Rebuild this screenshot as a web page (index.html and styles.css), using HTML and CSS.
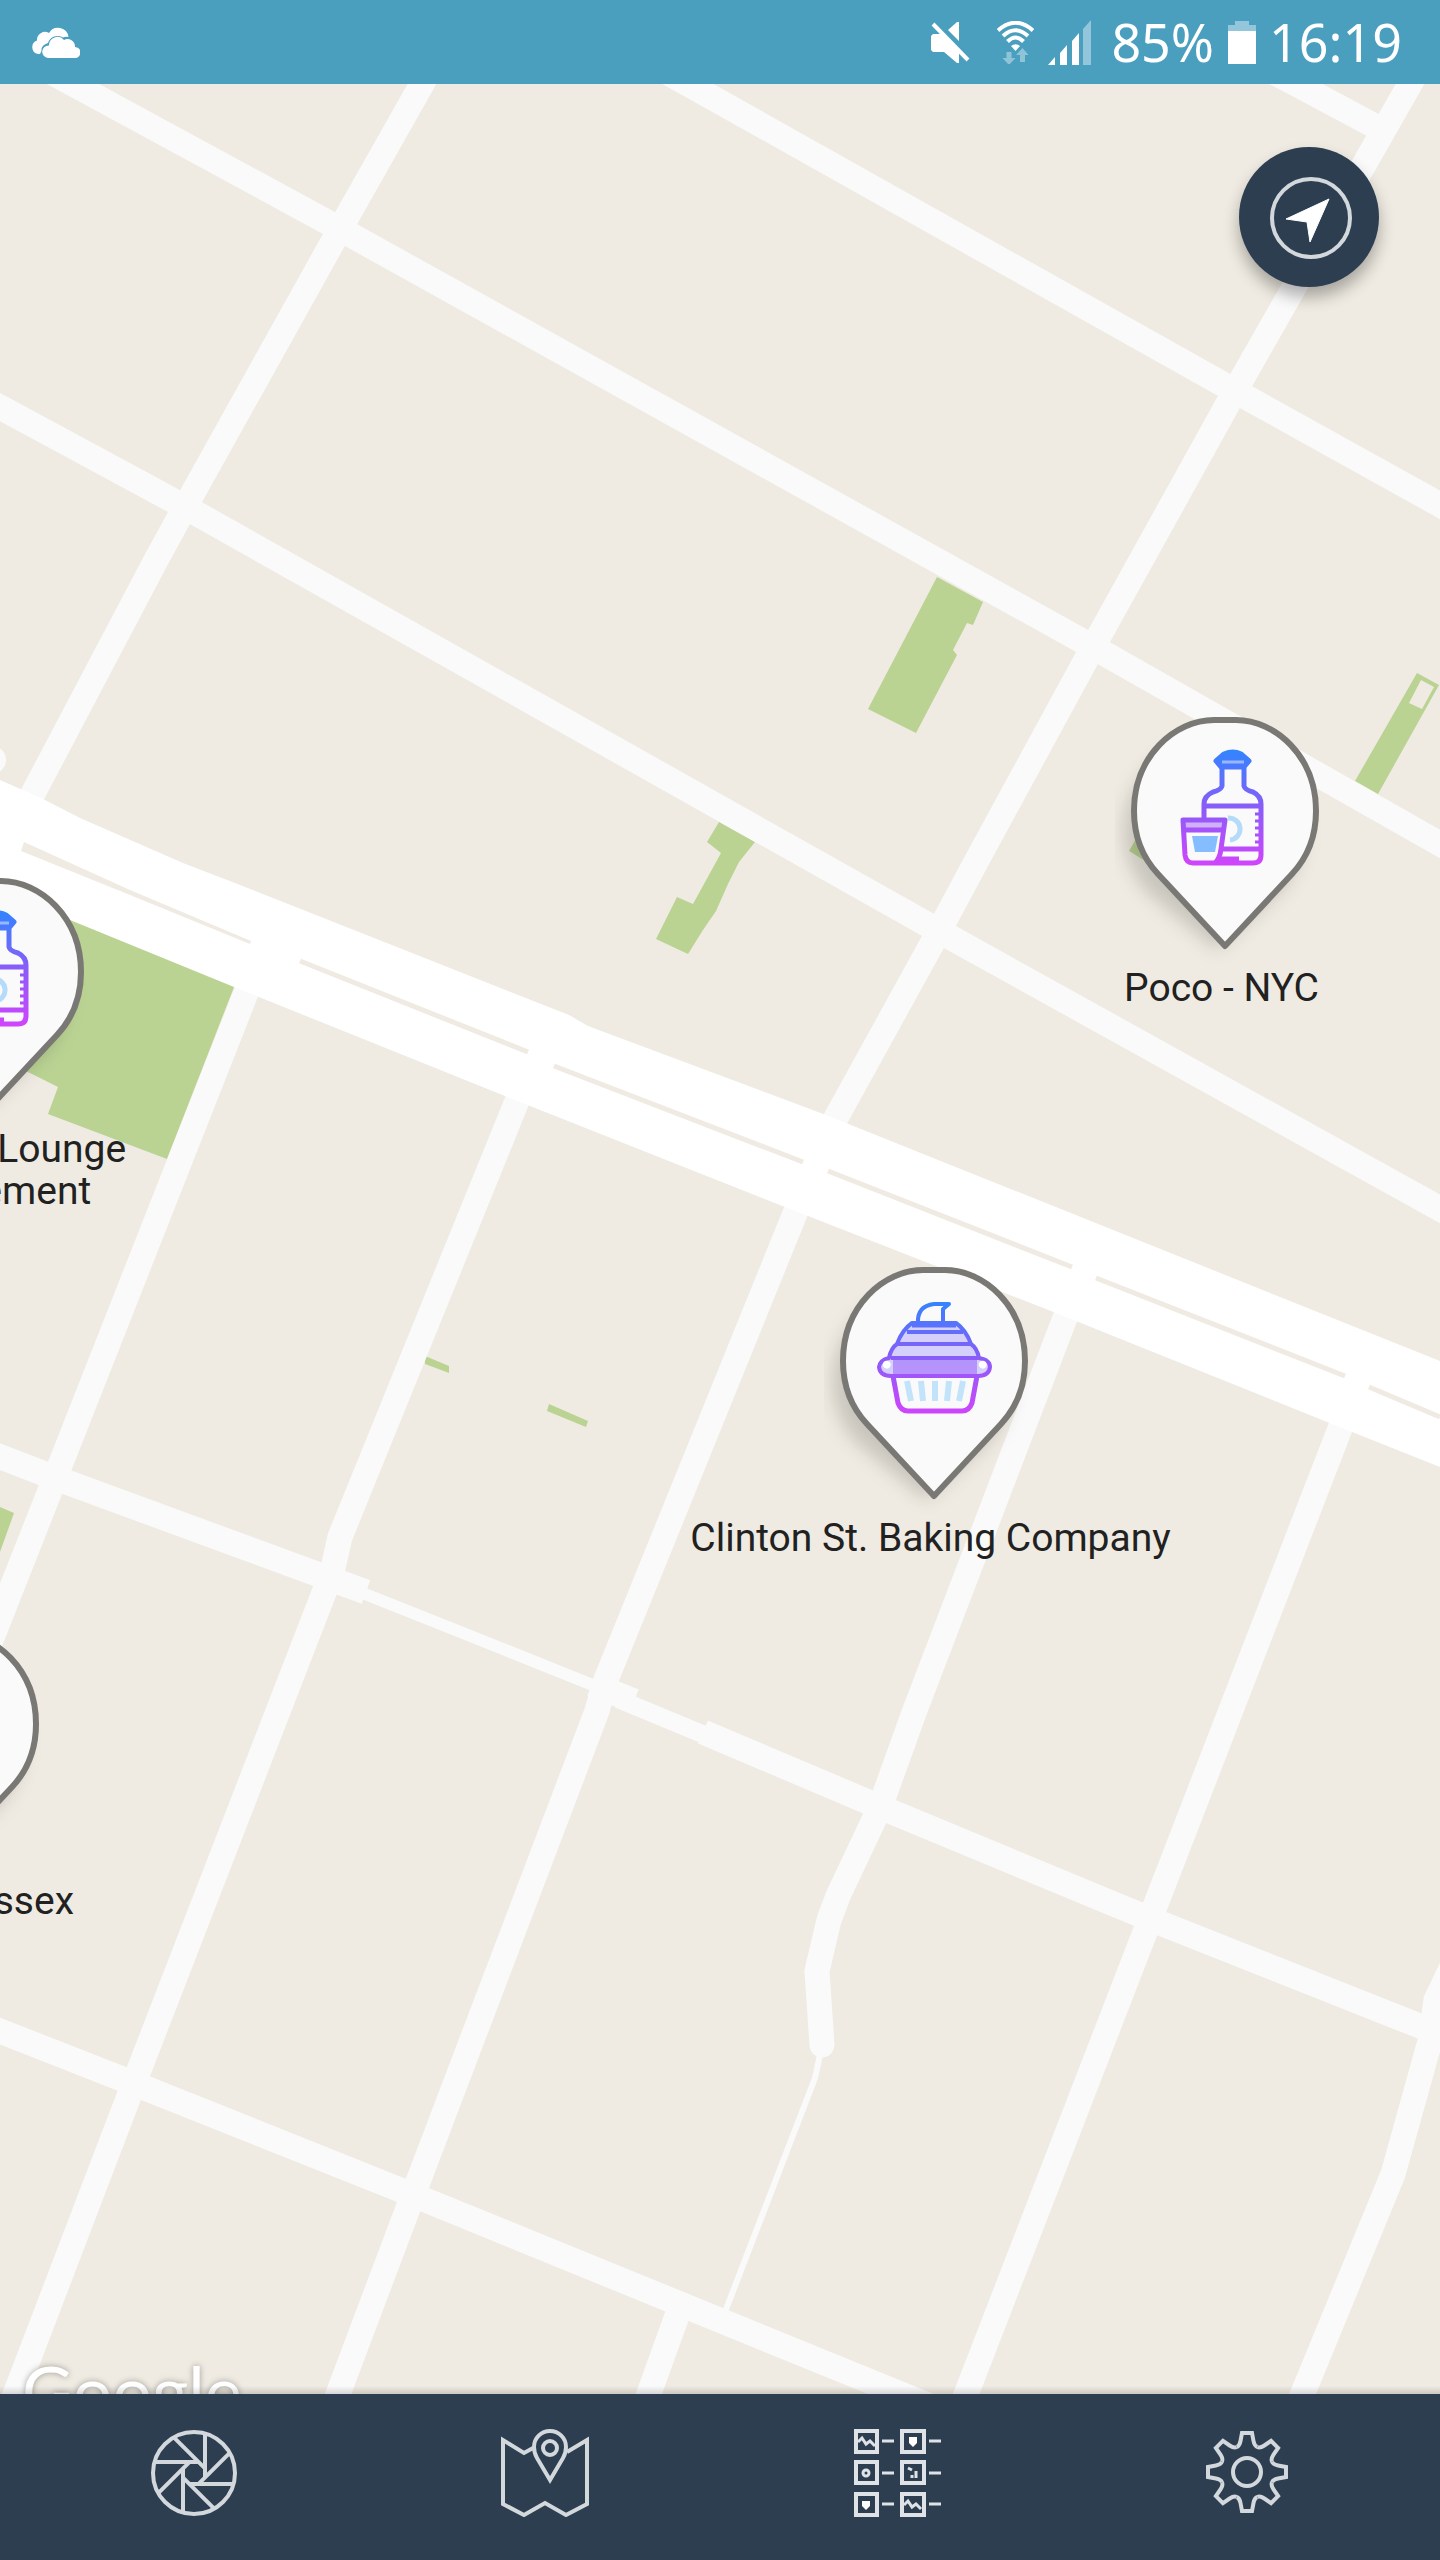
FILE: index.html
```html
<!DOCTYPE html>
<html lang="en">
<head>
<meta charset="utf-8">
<meta name="viewport" content="width=device-width, initial-scale=1">
<title>Map</title>
<link rel="stylesheet" href="styles.css">
</head>
<body>
<header class="status">
  <svg class="status-cloud" width="49" height="31" viewBox="0 0 49 31" aria-hidden="true">
    <path fill="#fff" d="M9 27H7A7 7 0 0 1 6 13.500A8 8 0 0 1 18 6A10.500 10.500 0 0 1 37.500 10Q34 9.500 32 10.500A10 10 0 0 0 17 16Q10 18 10.500 24Z"/>
    <path fill="#fff" d="M17 31A6 6 0 0 1 18 18.500A8.500 8.500 0 0 1 33 13A7.500 7.500 0 0 1 44 20A5.500 5.500 0 0 1 44 31Z"/>
  </svg>
  <svg class="status-mute" width="39" height="43" viewBox="0 0 39 43" aria-hidden="true">
    <path fill="#fff" d="M0 15L2 13H11L28 30V42H26L13 31H2L0 29ZM28 1V20L17 9L26 1Z"/>
    <path stroke="#fff" stroke-width="4" d="M2 3L37 39"/>
  </svg>
  <svg class="status-wifi" width="37" height="43" viewBox="0 0 37 43" aria-hidden="true">
    <path fill="none" stroke="#fff" stroke-width="4" d="M1 9.500Q18.500-6 36 9.500M6 15Q18.500 3.500 31 15M10.500 20.500Q18.500 12.500 26.500 20.500"/>
    <path fill="#fff" d="M14 25Q18.500 21.500 23 25L18.500 30Z"/>
    <path fill="#8fc3d8" d="M9.500 31h5v6h4l-6.500 7l-6.500-7h4ZM23 41h5v-7h3.500L25.500 27L19 34h4Z"/>
  </svg>
  <svg class="status-signal" width="43" height="46" viewBox="0 0 43 46" aria-hidden="true">
    <path fill="#fff" d="M0 46L7 38V46ZM12 46V34L19 26V46ZM24 46V22L31 14V46Z"/>
    <path fill="#93c6da" d="M35 46V10L43 1V46Z"/>
  </svg>
  <span class="status-text">85%</span>
  <svg class="status-battery" width="28" height="43" viewBox="0 0 28 43" aria-hidden="true">
    <path fill="#93c6da" d="M7 0H21V4H28V10H0V4H7Z"/>
    <path fill="#fff" d="M0 10H28V43H0Z"/>
  </svg>
  <span class="status-text">16:19</span>
</header>

<main class="map">
  <svg class="map-canvas" viewBox="0 84 1440 2310" preserveAspectRatio="xMinYMin slice" aria-hidden="true">
    <g class="park">
      <path d="M937 577L983 602L973 625L967 623L953 650L957 655L916 733L868 709Z"/>
      <path d="M719 822L755 842L739 862L728 884L716 911L703 930L688 954L656 939L677 897L693 904L721 853L707 842Z"/>
      <path fill-rule="evenodd" d="M1417 673L1439 685L1378 794L1355 781ZM1421 680L1409 703L1422 709L1434 687Z"/>
      <path d="M1129 851L1137 837L1165 850L1150 864Z"/>
      <path d="M0 880L70 905L240 975L234 987L167 1159L48 1114L58 1087L30 1073L0 1061Z"/>
      <path d="M0 1507L14 1513L0 1552Z"/>
      <path d="M425 1356L449 1366V1373L425 1364Z"/>
      <path d="M549 1404L588 1421L586 1427L547 1411Z"/>
    </g>
    <g class="road">
      <path d="M36 64L73 84L340 229L1093 647L1440 844L1460 855"/>
      <path d="M652 64L688 84L1235 391L1460 516"/>
      <path d="M-20 397L0 407L185 507L939 931L1460 1220"/>
      <path d="M1258 64L1296 84L1384 131"/>
      <path d="M433 64L422 84L340 229L185 507L155 562L18 822"/>
      <path d="M1421 64L1410 84L1235 391L1093 647L977 860L939 931L810 1165"/>
      <path d="M260 958L246 993L55 1478L-20 1668"/>
      <path d="M530 1068L517 1101L340 1537L333 1568L325 1590L134 2083L9 2410"/>
      <path d="M810 1176L796 1211L605 1682L597 1711L416 2187L332 2410"/>
      <path d="M1079 1284L1065 1318L915 1710L880 1807L838 1896L829 1920L817 1971L822 2045" stroke-linecap="round" stroke-linejoin="round"/>
      <path d="M682 2302L643 2410"/>
      <path d="M1355 1390L1341 1426L1231 1710L960 2410"/>
      <path d="M1460 1950L1436 2000L1430 2041L1393 2174L1296 2410"/>
      <path d="M-20 1449L50 1476L325 1577L366 1592"/>
      <path d="M592 1684L634 1701"/>
      <path d="M703 1732L880 1807L1150 1919L1430 2030"/>
      <path d="M-20 2023L0 2031L135 2084L413 2195L940 2410"/>
      <path class="road-mid" d="M618 1699L712 1738"/>
      <path class="road-narrow" d="M360 1592L478 1639L610 1692"/>
      <path class="road-path" d="M821 2050L815 2078L725 2312"/>
    </g>
    <circle cx="-8" cy="760" r="14" fill="#fafafa"/>
    <path class="avenue" d="M0 780L43 799L80 818L183 863L240 885L569 1015L588 1026L826 1115L1440 1361V1467L1332 1424L1056 1313L785 1207L505 1096L234 987L70 920L0 892Z"/>
    <path class="median" d="M300 961L528 1052M554 1066L803 1162M828 1171L1072 1267M1096 1278L1345 1376M1369 1387L1440 1417"/>
    <path class="median-wedge" d="M24 842L130 890L251 941L250 944L130 895L21 851Z"/>
  </svg>

  <span class="map-brand">Google</span>

  <svg class="defs" width="0" height="0" aria-hidden="true">
    <defs>
      <linearGradient id="ink" gradientUnits="userSpaceOnUse" x1="0" y1="38" x2="0" y2="150">
        <stop offset="0" stop-color="#3483ff"/>
        <stop offset=".5" stop-color="#8a5cf8"/>
        <stop offset="1" stop-color="#cf45fc"/>
      </linearGradient>
      <filter id="soft" x="-20%" y="-20%" width="140%" height="140%"><feGaussianBlur stdDeviation="9"/></filter>
      <symbol id="pin" viewBox="0 0 220 250">
        <path fill="#000" fill-opacity=".16" filter="url(#soft)" d="M102 236L32 178A90 90 0 1 1 165 178Z"/>
        <path fill="#fafafa" stroke="#797874" stroke-width="6" stroke-linejoin="round" d="M110 232L43 160C28 144 19 122 19 97C19 42 60 6 99 6H121C160 6 201 42 201 97C201 122 192 144 177 160Z"/>
      </symbol>
      <symbol id="bottle" viewBox="0 0 220 250">
        <g fill="none" stroke="url(#ink)" stroke-width="5" stroke-linejoin="round">
          <path fill="url(#ink)" d="M109 40Q118 36 126 40L134 47L129 53H106L101 47Z"/>
          <path d="M107 54V72Q106 76 98 78Q89 82 89 90V104M129 54V72Q130 76 138 78Q146 82 146 90V141Q146 149 138 149H78Q71 149 70 141L68 106H110L106 135Q105 144 100 149"/>
          <path d="M89 92H146M68 116H110M108 135H146"/>
          <path stroke-width="7" d="M102 146H124"/>
          <path stroke-width="3" d="M140 100H146M140 107H146M140 114H146M140 121H146M140 128H146"/>
          <path stroke-width="12" d="M68 111H110" opacity=".45"/>
        </g>
        <path fill="none" stroke="#b4dcfa" stroke-width="5" d="M113 104A11 11 0 1 1 115 126"/>
        <path fill="#86bdff" d="M77 122H103L100 138H80Z"/>
        <path fill="none" stroke="#fff" stroke-width="3" d="M107 48H129" opacity=".45"/>
      </symbol>
      <symbol id="cupcake" viewBox="0 0 220 250">
        <g stroke="url(#ink)" stroke-width="4" stroke-linejoin="round" fill="none">
          <path d="M94 59Q93 42 110 40H125L119 45V59"/>
          <path fill="#d5cffc" d="M88 59H132Q142 66 147 80Q153 84 155 94Q166 96 166 103Q165 112 154 112H67Q56 112 55 103Q56 96 65 94Q67 84 73 80Q78 66 88 59Z"/>
          <path d="M83 68H139M74 80H147M67 94H154"/>
          <path stroke-width="14" d="M69 103H153" opacity=".5"/>
          <path stroke-width="5" d="M88 61H132M69 112L74 139Q77 147 84 147H138Q145 147 148 139L153 112"/>
        </g>
        <path fill="#fff" d="M59 102a4 4 0 1 1 7 1a4 4 0 0 1-7-1M155 102a4 4 0 1 1 7 1a4 4 0 0 1-7-1"/>
        <path fill="none" stroke="#c3e3fb" stroke-width="6" d="M83 117L87 137M97 117L99 137M111 117V137M125 117L123 137M139 117L135 137"/>
      </symbol>
    </defs>
  </svg>

  <a class="pin pin-poco" href="#poco">
    <svg class="pin-icon" viewBox="0 0 220 250" aria-hidden="true"><use href="#pin"/><use href="#bottle"/></svg>
    <span class="pin-label">Poco - NYC</span>
  </a>
  <a class="pin pin-clinton" href="#clinton">
    <svg class="pin-icon" viewBox="0 0 220 250" aria-hidden="true"><use href="#pin"/><use href="#cupcake"/></svg>
    <span class="pin-label">Clinton St. Baking Company</span>
  </a>
  <a class="pin pin-lounge" href="#lounge">
    <svg class="pin-icon" viewBox="0 0 220 250" aria-hidden="true"><use href="#pin"/><use href="#bottle"/></svg>
    <span class="pin-label">Cocktail Lounge<br>&amp; Basement</span>
  </a>
  <a class="pin pin-essex" href="#essex">
    <svg class="pin-icon" viewBox="0 0 220 250" aria-hidden="true"><use href="#pin"/></svg>
    <span class="pin-label">Beauty &amp; Essex</span>
  </a>

  <button class="locate" type="button" aria-label="My location">
    <svg width="86" height="86" viewBox="0 0 86 86" aria-hidden="true">
      <circle cx="45" cy="44" r="39" fill="none" stroke="#d3d8dc" stroke-width="4"/>
      <path fill="#fff" stroke="#fff" stroke-width="1" stroke-linejoin="round" d="M63 25L20 45L41 48L44 68Z"/>
    </svg>
  </button>
</main>

<nav class="tabs" aria-label="Main">
  <a class="tab" href="#capture" aria-label="Capture">
    <svg width="88" height="88" viewBox="0 0 88 88" fill="none" stroke="#d3d8dd" stroke-width="4" aria-hidden="true">
      <circle cx="44" cy="44" r="41"/>
      <path id="blade" d="M55 4.500V48.500"/>
      <use href="#blade" transform="rotate(45 44 44)"/>
      <use href="#blade" transform="rotate(90 44 44)"/>
      <use href="#blade" transform="rotate(135 44 44)"/>
      <use href="#blade" transform="rotate(180 44 44)"/>
      <use href="#blade" transform="rotate(225 44 44)"/>
      <use href="#blade" transform="rotate(270 44 44)"/>
      <use href="#blade" transform="rotate(315 44 44)"/>
    </svg>
  </a>
  <a class="tab" href="#map" aria-label="Map">
    <svg width="88" height="88" viewBox="0 0 88 88" fill="none" stroke="#d3d8dd" stroke-width="4" aria-hidden="true">
      <path d="M32 19L23 24L2 11V75L23 86L44 74L65 86L86 75V11L66 23"/>
      <path d="M49 51L36 29Q33 24 33 18A16 16 0 0 1 65 18Q65 24 62 29Z"/>
      <circle cx="49" cy="19" r="7"/>
    </svg>
  </a>
  <a class="tab" href="#list" aria-label="List">
    <svg width="88" height="88" viewBox="-2 0 88 88" overflow="visible" fill="none" stroke="#dfe3e7" stroke-width="4" aria-hidden="true">
      <path d="M2 2H23V23H2ZM2 33H23V54H2ZM2 65H23V86H2ZM48 2H70V23H48ZM48 33H70V54H48ZM48 65H70V86H48Z"/>
      <path stroke-width="3" d="M28 12H40M28 44H40M28 75H40M75 12H87M75 44H87M75 75H87"/>
      <path stroke-width="3" d="M4 13L8 9L12 15L16 12L21 17M50 76L54 72L58 78L62 75L67 80M54 39L58 41M62 42V49M58 46V49"/>
      <circle cx="12" cy="44" r="3" stroke-width="3"/>
      <path fill="#fff" stroke="none" d="M55 8H63V14L59 18L55 14ZM8 72H16V77L12 81L8 77Z"/>
    </svg>
  </a>
  <a class="tab" href="#settings" aria-label="Settings">
    <svg width="88" height="88" viewBox="0 0 88 88" fill="none" stroke="#d3d8dd" stroke-width="4" aria-hidden="true">
      <circle cx="44" cy="43" r="14"/>
      <g transform="translate(0 -1)">
        <path id="tooth" d="M33.700 19Q36.500 18 37.500 13L39 5H49L50.500 13Q51.500 18 54.300 19"/>
        <use href="#tooth" transform="rotate(45 44 44)"/>
        <use href="#tooth" transform="rotate(90 44 44)"/>
        <use href="#tooth" transform="rotate(135 44 44)"/>
        <use href="#tooth" transform="rotate(180 44 44)"/>
        <use href="#tooth" transform="rotate(225 44 44)"/>
        <use href="#tooth" transform="rotate(270 44 44)"/>
        <use href="#tooth" transform="rotate(315 44 44)"/>
      </g>
    </svg>
  </a>
</nav>
</body>
</html>
```
FILE: styles.css
```css
* {
  box-sizing: border-box;
}

body {
  display: flex;
  flex-direction: column;
  min-height: 100vh;
  margin: 0;
  background: #efebe2;
  color: #212121;
  font-family: Roboto, "Liberation Sans", sans-serif;
}

svg {
  display: block;
}

/* Status bar */
.status {
  display: flex;
  align-items: center;
  height: 84px;
  padding: 0 38px 0 31px;
  background: #4a9ebe;
  color: #fff;
}

.status-cloud {
  margin-right: auto;
}

.status-mute {
  margin-right: 27px;
}

.status-wifi {
  margin-right: 14px;
}

.status-signal {
  margin-right: 20px;
}

.status-battery {
  margin: 0 13px 0 14px;
}

.status-text {
  font: 52px/84px "Noto Sans", "Open Sans", sans-serif;
}

/* Map */
.map {
  position: relative;
  flex: 1;
  overflow: hidden;
}

.map-canvas {
  position: absolute;
  inset: 0;
  width: 100%;
  height: 100%;
}

.park {
  fill: #bad393;
}

.road {
  fill: none;
  stroke: #fafafa;
  stroke-width: 25px;
}

.road-mid {
  stroke-width: 18px;
}

.road-narrow {
  stroke-width: 12px;
}

.road-path {
  stroke-width: 6px;
}

.avenue {
  fill: #fff;
}

.median {
  fill: none;
  stroke: #efebe2;
  stroke-width: 5px;
}

.median-wedge {
  fill: #efebe2;
}

.defs {
  position: absolute;
}

.map-brand {
  position: absolute;
  left: 22px;
  bottom: -36px;
  color: #fff;
  font: 70px/80px Lato, sans-serif;
  text-shadow: 0 0 6px rgba(0, 0, 0, 0.35);
}

.map::after {
  content: "";
  position: absolute;
  inset: auto 0 0;
  height: 8px;
  background: linear-gradient(rgba(0, 0, 0, 0), rgba(0, 0, 0, 0.14));
}

.pin {
  position: absolute;
  display: flex;
  flex-direction: column;
  align-items: center;
  width: 500px;
  margin-left: -250px;
  color: inherit;
  text-align: center;
  text-decoration: none;
}

.pin-icon {
  width: 220px;
  height: 250px;
}

.pin-label {
  padding: 3px 7px 0 0;
  font-size: 39px;
  line-height: 42px;
  white-space: nowrap;
}

.pin-poco {
  left: 1225px;
  top: 630px;
}

.pin-clinton {
  left: 934px;
  top: 1180px;
}

.pin-lounge {
  left: -10px;
  top: 791px;
}

.pin-essex {
  left: -55px;
  top: 1543px;
}

.locate {
  position: absolute;
  top: 63px;
  right: 61px;
  display: flex;
  align-items: center;
  justify-content: center;
  width: 140px;
  height: 140px;
  padding: 0;
  border: 0;
  border-radius: 50%;
  background: #2c3e50;
  box-shadow: 0 10px 16px rgba(0, 0, 0, 0.3);
}

/* Bottom tabs */
.tabs {
  display: grid;
  grid-template-columns: repeat(4, 1fr);
  padding: 35px 18px 43px;
  background: #2c3e50;
}

.tab {
  display: flex;
  justify-content: center;
}
```
